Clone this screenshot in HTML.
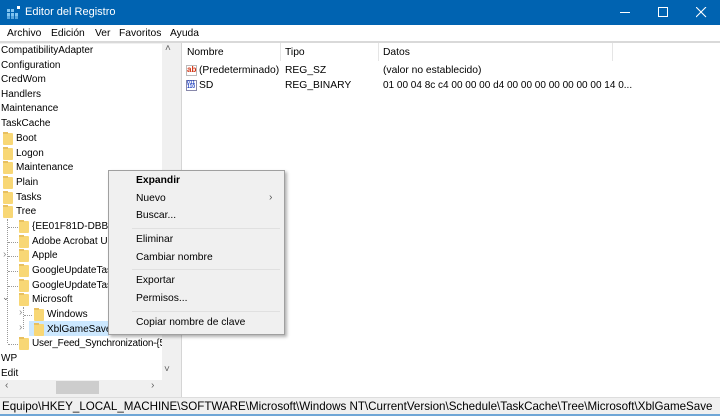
<!DOCTYPE html>
<html><head><meta charset="utf-8"><style>
*{margin:0;padding:0;box-sizing:border-box}
body{width:720px;height:416px;overflow:hidden;background:#fff;font-family:"Liberation Sans",sans-serif;font-size:10.3px;color:#000;position:relative}
.a{position:absolute;white-space:nowrap}
.f{position:absolute;width:10px;height:12px;background:#f8d775;border-radius:1px}
.f:before{content:"";position:absolute;left:0;top:-1px;width:5px;height:2px;background:#e8c060}
.dl{position:absolute;border-top:1px dotted #999;height:0}
.dv{position:absolute;border-left:1px dotted #999;width:0}
.mi{position:absolute;left:136px}
.sep{position:absolute;left:132px;width:148px;height:1px;background:#e0e0e0}
</style></head><body>
<div class="a" style="left:0;top:0;width:720px;height:25px;background:#0063b1"></div>
<svg class="a" style="left:7px;top:6px" width="14" height="13"><g fill="#7fc3f0"><rect x="0" y="3" width="3" height="3"/><rect x="4" y="3" width="3" height="3"/><rect x="0" y="7" width="3" height="3"/><rect x="4" y="7" width="3" height="3"/><rect x="8" y="7" width="3" height="3"/><rect x="0" y="10" width="3" height="3" opacity=".7"/><rect x="4" y="10" width="3" height="3" opacity=".7"/><rect x="8" y="10" width="3" height="3" opacity=".7"/><rect x="10" y="0" width="3" height="3" fill="#fff"/></g></svg>
<div class="a" style="left:25px;top:6px;color:#fff;font-size:11px">Editor del Registro</div>
<div class="a" style="left:620px;top:12px;width:10px;height:1px;background:#fff"></div>
<div class="a" style="left:658px;top:7px;width:10px;height:10px;border:1px solid #fff"></div>
<svg class="a" style="left:696px;top:7px" width="11" height="11"><path d="M0 0L10 10M10 0L0 10" stroke="#fff" stroke-width="1.1"/></svg>
<div class="a" style="left:0;top:25px;width:720px;height:16px;background:#fff"></div>
<div class="a" style="left:7px;top:28px">Archivo</div>
<div class="a" style="left:51px;top:28px">Edición</div>
<div class="a" style="left:95px;top:28px">Ver</div>
<div class="a" style="left:119px;top:28px">Favoritos</div>
<div class="a" style="left:170px;top:28px">Ayuda</div>
<div class="a" style="left:0;top:41px;width:720px;height:2px;background:#d9d9d9"></div>
<div class="a" style="left:0;top:43px;width:720px;height:357px;background:#f0f0f0"></div>
<div class="a" style="left:0;top:44px;width:162px;height:336px;background:#fff;overflow:hidden;font-size:10px">
<div class="a" style="left:1px;top:1px">CompatibilityAdapter</div>
<div class="a" style="left:1px;top:16px">Configuration</div>
<div class="a" style="left:1px;top:30px">CredWom</div>
<div class="a" style="left:1px;top:45px">Handlers</div>
<div class="a" style="left:1px;top:59px">Maintenance</div>
<div class="a" style="left:1px;top:74px">TaskCache</div>
<div class="f" style="left:3px;top:89px"></div><div class="a" style="left:16px;top:89px">Boot</div>
<div class="f" style="left:3px;top:104px"></div><div class="a" style="left:16px;top:104px">Logon</div>
<div class="f" style="left:3px;top:118px"></div><div class="a" style="left:16px;top:118px">Maintenance</div>
<div class="f" style="left:3px;top:133px"></div><div class="a" style="left:16px;top:133px">Plain</div>
<div class="f" style="left:3px;top:148px"></div><div class="a" style="left:16px;top:148px">Tasks</div>
<div class="f" style="left:3px;top:162px"></div><div class="a" style="left:16px;top:162px">Tree</div>
<div class="dv" style="left:7px;top:175px;height:124px"></div>
<div class="dl" style="left:8px;top:183px;width:10px"></div><div class="f" style="left:19px;top:177px"></div><div class="a" style="left:32px;top:177px">{EE01F81D-DBB7-4</div>
<div class="dl" style="left:8px;top:198px;width:10px"></div><div class="f" style="left:19px;top:192px"></div><div class="a" style="left:32px;top:192px">Adobe Acrobat Up</div>
<div class="a" style="left:3px;top:205px;color:#888">›</div><div class="dl" style="left:8px;top:212px;width:10px"></div><div class="f" style="left:19px;top:206px"></div><div class="a" style="left:32px;top:206px">Apple</div>
<div class="dl" style="left:8px;top:227px;width:10px"></div><div class="f" style="left:19px;top:221px"></div><div class="a" style="left:32px;top:221px">GoogleUpdateTas</div>
<div class="dl" style="left:8px;top:242px;width:10px"></div><div class="f" style="left:19px;top:236px"></div><div class="a" style="left:32px;top:236px">GoogleUpdateTas</div>
<div class="a" style="left:2px;top:248px;color:#666;font-size:9px">⌄</div><div class="f" style="left:19px;top:250px"></div><div class="a" style="left:32px;top:250px">Microsoft</div>
<div class="dv" style="left:23px;top:263px;height:22px"></div>
<div class="a" style="left:19px;top:263px;color:#888">›</div><div class="dl" style="left:24px;top:271px;width:8px"></div><div class="f" style="left:34px;top:265px"></div><div class="a" style="left:47px;top:265px">Windows</div>
<div class="a" style="left:29px;top:277px;width:80px;height:15px;background:#cce8ff"></div>
<div class="a" style="left:19px;top:278px;color:#888">›</div><div class="f" style="left:34px;top:280px"></div><div class="a" style="left:47px;top:280px">XblGameSave</div>
<div class="dl" style="left:8px;top:300px;width:10px"></div><div class="f" style="left:19px;top:294px"></div><div class="a" style="left:32px;top:294px;letter-spacing:-0.2px">User_Feed_Synchronization-{5</div>
<div class="a" style="left:1px;top:309px">WP</div>
<div class="a" style="left:1px;top:324px">Edit</div>
</div>
<div class="a" style="left:162px;top:43px;width:15px;height:337px;background:#f0f0f0"></div>
<div class="a" style="left:165px;top:43px;color:#606060;font-size:10px">˄</div>
<div class="a" style="left:164px;top:364px;color:#606060;font-size:10px">˅</div>
<div class="a" style="left:0;top:380px;width:177px;height:15px;background:#f0f0f0"></div>
<div class="a" style="left:56px;top:381px;width:43px;height:13px;background:#cdcdcd"></div>
<div class="a" style="left:5px;top:380px;color:#606060">‹</div>
<div class="a" style="left:151px;top:380px;color:#606060">›</div>
<div class="a" style="left:181px;top:43px;width:539px;height:354px;background:#fff;border-left:1px solid #d5d5d5"></div>
<div class="a" style="left:280px;top:43px;width:1px;height:18px;background:#e5e5e5"></div>
<div class="a" style="left:378px;top:43px;width:1px;height:18px;background:#e5e5e5"></div>
<div class="a" style="left:612px;top:43px;width:1px;height:18px;background:#e5e5e5"></div>
<div class="a" style="left:187px;top:47px">Nombre</div>
<div class="a" style="left:285px;top:47px">Tipo</div>
<div class="a" style="left:383px;top:47px">Datos</div>
<div class="a" style="left:186px;top:65px;width:11px;height:11px;border:1px solid #bbb;background:#fff;color:#d03010;font-size:8px;font-weight:bold;line-height:8px">ab</div>
<div class="a" style="left:199px;top:65px">(Predeterminado)</div>
<div class="a" style="left:285px;top:65px">REG_SZ</div>
<div class="a" style="left:383px;top:65px">(valor no establecido)</div>
<div class="a" style="left:186px;top:80px;width:11px;height:11px;border:1px solid #88a;background:#fff;color:#2040c0;font-size:5px;line-height:4px;font-weight:bold">011<br>110</div>
<div class="a" style="left:199px;top:80px">SD</div>
<div class="a" style="left:285px;top:80px">REG_BINARY</div>
<div class="a" style="left:383px;top:80px;font-size:10px">01 00 04 8c c4 00 00 00 d4 00 00 00 00 00 00 00 14 0...</div>
<div class="a" style="left:0;top:397px;width:720px;height:19px;background:#f0f0f0;border-top:1px solid #ddd"></div>
<div class="a" style="left:2px;top:400px;font-size:11.6px">Equipo\HKEY_LOCAL_MACHINE\SOFTWARE\Microsoft\Windows NT\CurrentVersion\Schedule\TaskCache\Tree\Microsoft\XblGameSave</div>
<div class="a" style="left:0;top:414px;width:720px;height:2px;background:#6fa6d6"></div>
<div class="a" style="left:108px;top:170px;width:177px;height:165px;background:#f0f0f0;border:1px solid #a0a0a0;box-shadow:2px 2px 3px rgba(0,0,0,.3)"></div>
<div class="mi" style="top:175px;font-weight:bold">Expandir</div>
<div class="mi" style="top:193px">Nuevo</div>
<div class="a" style="left:269px;top:192px;color:#555">›</div>
<div class="mi" style="top:210px">Buscar...</div>
<div class="sep" style="top:228px"></div>
<div class="mi" style="top:234px">Eliminar</div>
<div class="mi" style="top:252px">Cambiar nombre</div>
<div class="sep" style="top:269px"></div>
<div class="mi" style="top:275px">Exportar</div>
<div class="mi" style="top:293px">Permisos...</div>
<div class="sep" style="top:311px"></div>
<div class="mi" style="top:317px">Copiar nombre de clave</div>
</body></html>
